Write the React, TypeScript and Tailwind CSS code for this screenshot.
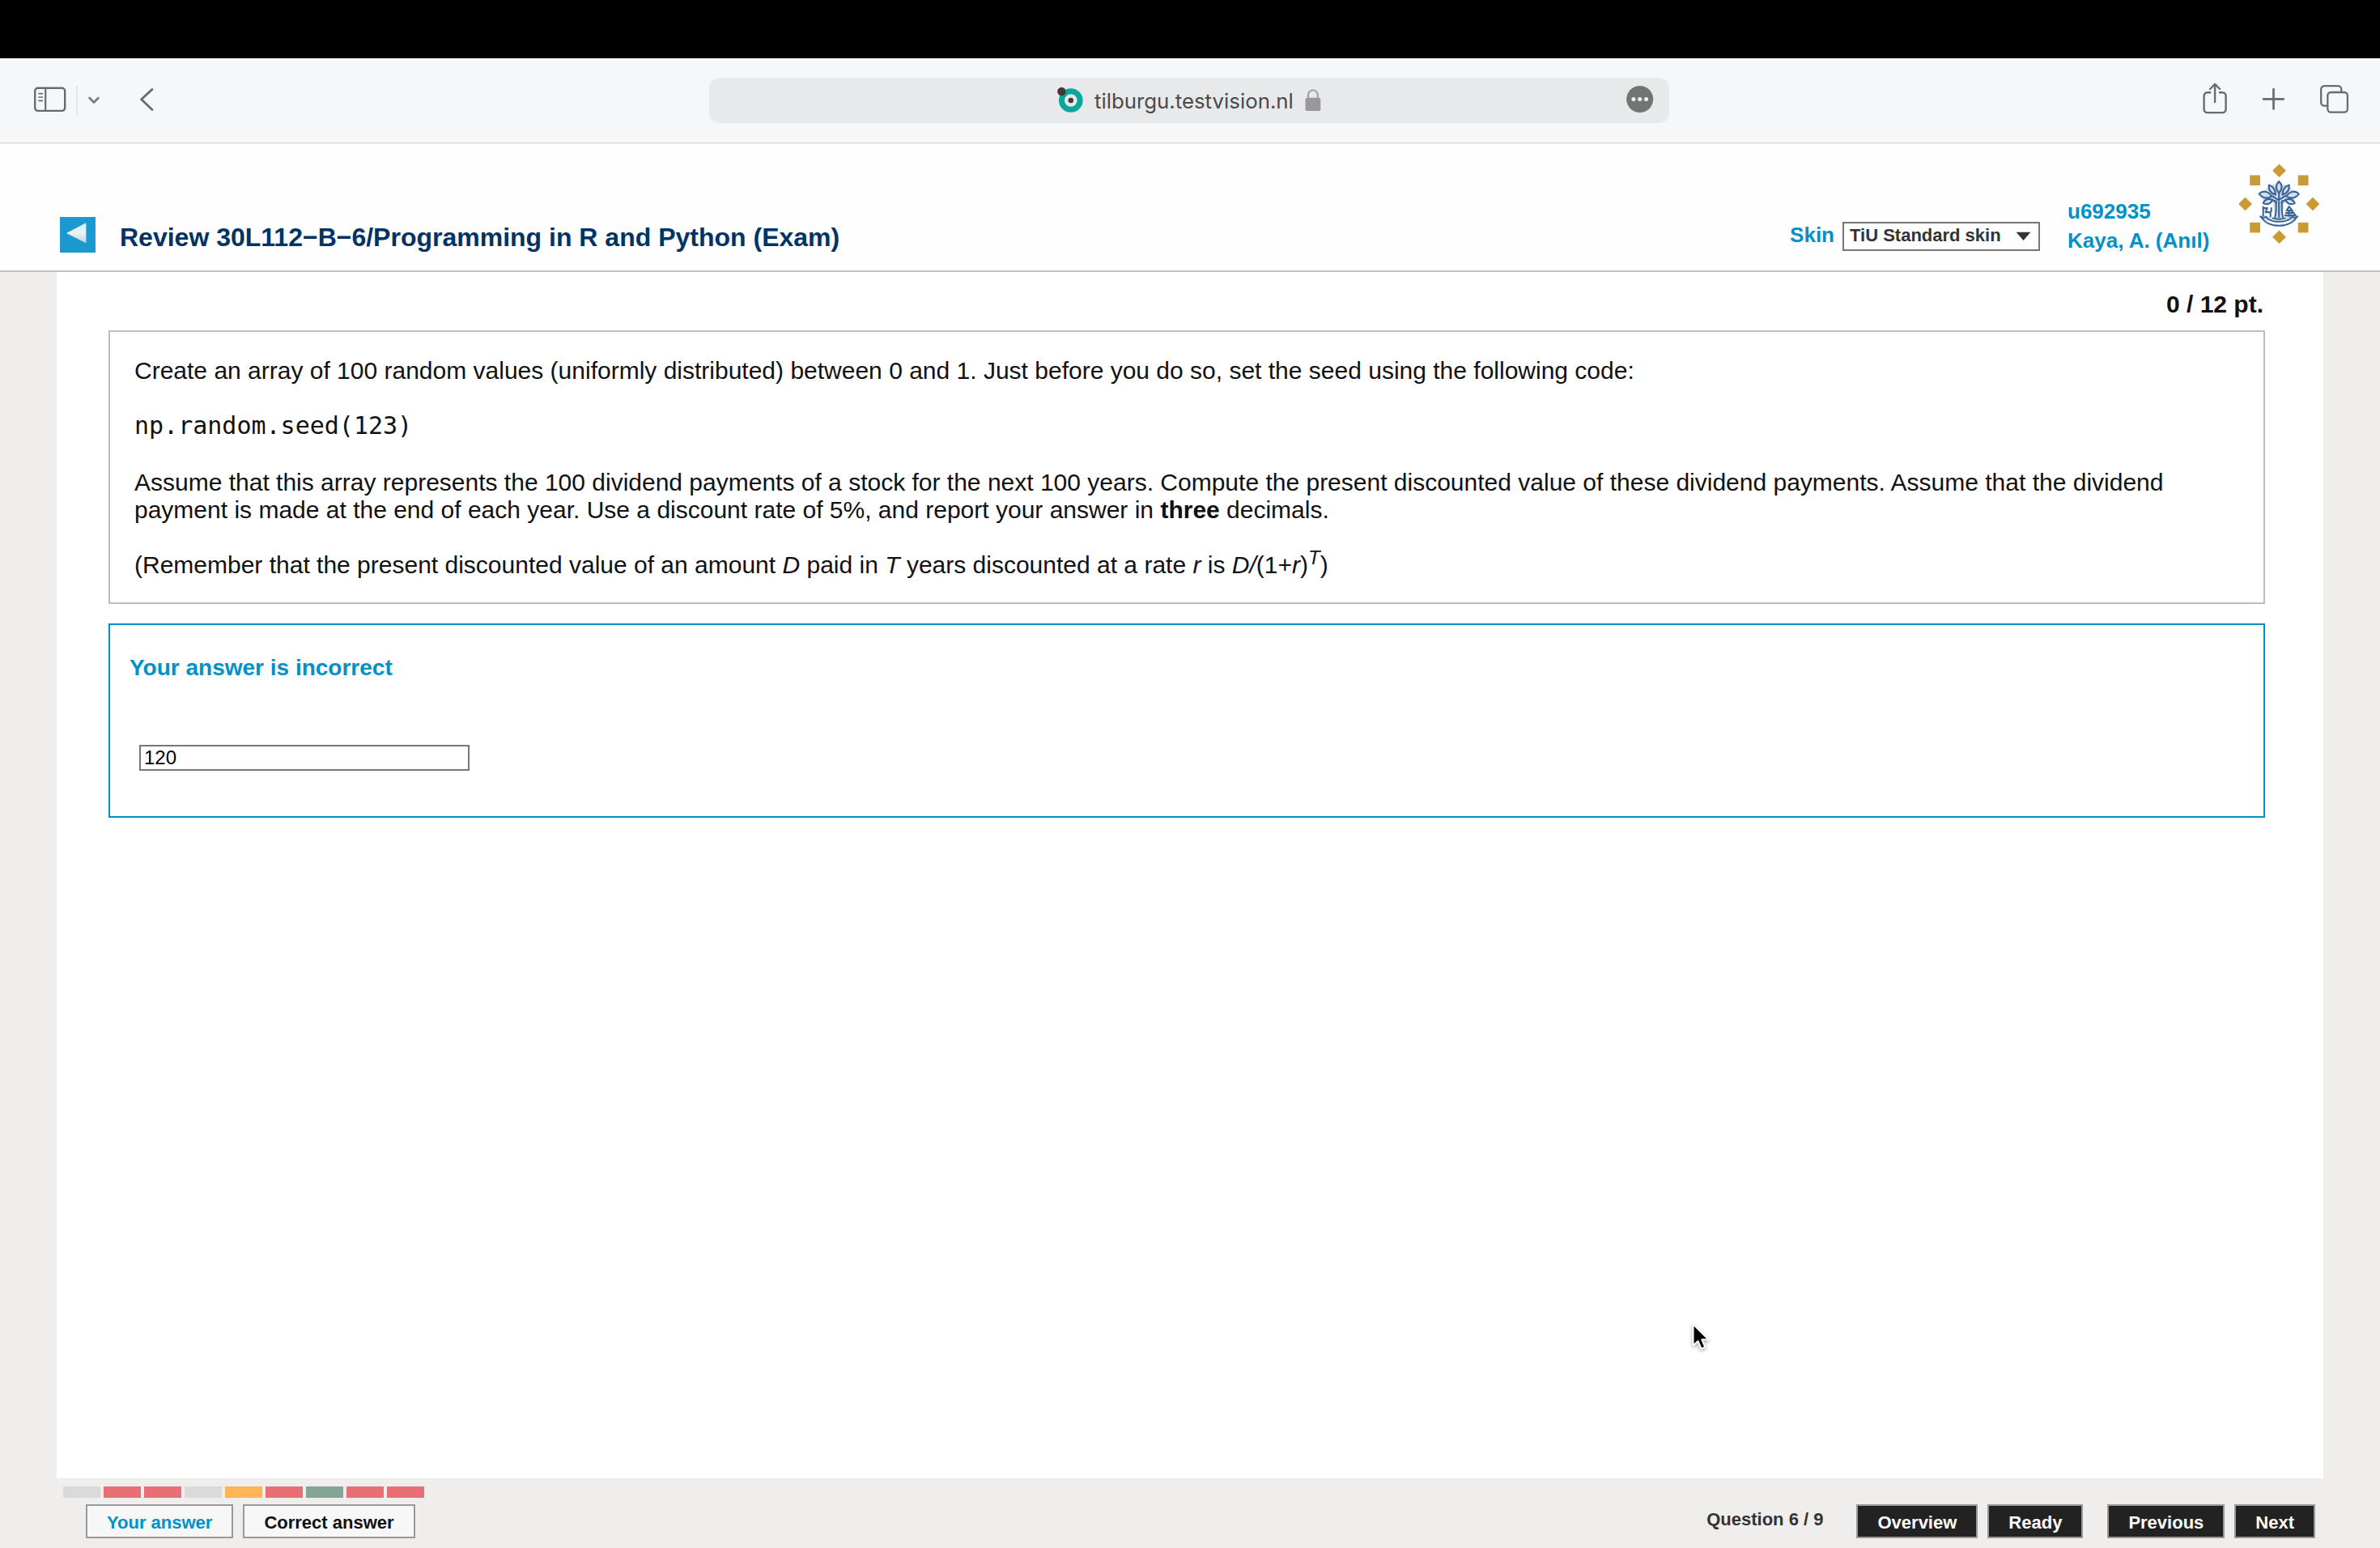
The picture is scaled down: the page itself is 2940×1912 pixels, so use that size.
import type { ReactNode } from "react";

const progress = [
  "bg-[#dadada]",
  "bg-[#e86f76]",
  "bg-[#e86f76]",
  "bg-[#dadada]",
  "bg-[#ffb555]",
  "bg-[#e86f76]",
  "bg-[#84a497]",
  "bg-[#e86f76]",
  "bg-[#e86f76]",
];

function SidebarIcon() {
  return (
    <svg className="block h-[32px] w-[40px]" viewBox="0 0 40 32" fill="none" stroke="#6b6b6d">
      <rect x="1.2" y="1.7" width="37" height="28.2" rx="3.6" strokeWidth="2.4" />
      <path d="M14.2 2v28" strokeWidth="2.2" />
      <path d="M6 8.6h4.4M6 13h4.4M6 17.4h4.4" strokeWidth="1.7" strokeLinecap="round" />
    </svg>
  );
}

function ShareIcon() {
  return (
    <svg className="block h-[42px] w-[32px]" viewBox="0 0 32 42" fill="none" stroke="#6b6b6d" strokeWidth="2.4" strokeLinecap="round" strokeLinejoin="round">
      <path d="M10.2 14.300H5.600a4 4 0 0 0-4 4v16.800a4 4 0 0 0 4 4h19a4 4 0 0 0 4-4v-16.800a4 4 0 0 0-4-4H20" strokeLinecap="butt" />
      <path d="M15.100 26V4M9 10l6.100-6.100 6.100 6.100" />
    </svg>
  );
}

function TabsIcon() {
  return (
    <svg className="block h-[36px] w-[36px]" viewBox="0 0 36 36" fill="none" stroke="#6b6b6d" strokeWidth="2.3">
      <path d="M9.2 25.6H5.2a4 4 0 0 1-4-4V5.200a4 4 0 0 1 4-4h17a4 4 0 0 1 4 4v4" />
      <rect x="9.3" y="9" width="24.6" height="24.6" rx="4" />
    </svg>
  );
}

function UniversityLogo() {
  return (
    <svg className="block h-[100px] w-[100px]" viewBox="0 0 100 100" fill="none">
      <g fill="#cc9a33">
        <path d="M49.5 .4l8.4 8.3-8.4 8.3-8.4-8.3z" />
        <path d="M49.5 82.5l8.4 8.3-8.4 8.3-8.4-8.3z" />
        <path d="M7.6 41.5l8.3 8.4-8.3 8.4L0 50.700v-1.600z" />
        <path d="M91 41.5l8.3 8.4-8.3 8.4-8.4-8.4z" />
        <rect x="13.2" y="14.4" width="12.8" height="12.6" />
        <rect x="72.7" y="14.4" width="12.8" height="12.6" />
        <rect x="13.2" y="72.8" width="12.8" height="12.6" />
        <rect x="72.7" y="72.8" width="12.8" height="12.6" />
      </g>
      <g transform="translate(-.3 -.9)">
        <path d="M36 30l13-6 14 6 8 9-6 13-9-3-3 22h-8l-3-22-9 4-6-14z" fill="#c6d6e6" opacity=".8" />
        <path d="M29 66h12v6H29zM58 66h12v6H58z" fill="#c6d6e6" opacity=".8" />
        <g stroke="#3a6496" strokeWidth="2.1" strokeLinecap="round" strokeLinejoin="round">
          <path d="M49.5 23c-4.6 4.8-4.6 9.5 0 14.3 4.6-4.8 4.6-9.5 0-14.3z" />
          <path d="M37 27.5c-.8 6.2 1.8 9.800 8.300 12-.2-6.600-2.800-10.400-8.300-12z" />
          <path d="M62 27.5c.8 6.200-1.800 9.800-8.300 12 .2-6.600 2.800-10.400 8.300-12z" />
          <path d="M25 38.5c4.400-4.600 10.500-4 15.700 2.800-6.400 3.600-11.400 2.600-15.700-2.800z" />
          <path d="M74 38.5c-4.400-4.600-10.500-4-15.700 2.800 6.400 3.600 11.400 2.600 15.700-2.800z" />
          <path d="M30 50c2-5 6-6.400 11.500-4.400-2 5-6 6.600-11.500 4.400z" />
          <path d="M69 50c-2-5-6-6.400-11.500-4.400 2 5 6 6.600 11.500 4.400z" />
          <path d="M49.5 37v8M41 41l8 5 8-5M42 46l4.500 3M57 46l-4.500 3" />
          <path d="M45.5 47c1 8 .6 14-.8 20M53.500 47c-1 8-.6 14 .8 20M49.500 48v19" />
          <path d="M30 54.5v11M30 56h5l-2 5h6v5M40 56v4" />
          <path d="M62 54l-3 5h7zM62 59v7M57 65h13M66 60l4 5M58 62h8" />
          <path d="M26.5 66.5c1.500 1.500 4 1.500 6.500.5M72.500 66.500c-1.500 1.500-4 1.500-6.500.5" />
          <path d="M27.5 66.5c3.500 7 12 11.200 22 11.200s18.500-4.200 22-11.200" />
          <path d="M33 66.5c3.500 4 9.500 6.200 16.500 6.200s13-2.200 16.500-6.200" />
          <path d="M42 68.5c4.800 1.400 10.200 1.400 15 0" />
        </g>
      </g>
    </svg>
  );
}

function BrowserBar() {
  return (
    <div className="flex h-[104px] shrink-0 items-start bg-[#f6f7f9]">
      <div className="ml-[42px] mt-[35px]">
        <SidebarIcon />
      </div>
      <div className="ml-[12px] mt-[34px] h-[36px] w-[2px] bg-[#e5e6e8]" />
      <svg className="ml-[12px] mt-[46px] block h-[12px] w-[16px]" viewBox="0 0 16 12" fill="none" stroke="#7f7f81" strokeWidth="2.8" strokeLinecap="round" strokeLinejoin="round">
        <path d="M2.6 3l5.4 5.4L13.4 3" />
      </svg>
      <svg className="ml-[48px] mt-[36px] block h-[30px] w-[18px]" viewBox="0 0 18 30" fill="none" stroke="#6b6b6d" strokeWidth="2.8" strokeLinecap="round" strokeLinejoin="round">
        <path d="M16 2.4L2.6 14.7 16 27.4" />
      </svg>
      <div className="ml-[686px] mt-[24px] flex h-[56px] w-[1186px] items-start rounded-[13px] bg-[#e8e9eb]">
        <svg className="ml-[428px] mt-[10px] block h-[36px] w-[36px]" viewBox="0 0 36 36">
          <circle cx="18.8" cy="18" r="14.8" fill="#0aa79a" />
          <circle cx="18.8" cy="18" r="7.8" fill="#e8e9eb" />
          <circle cx="18.8" cy="18" r="3.3" fill="#433a38" />
          <circle cx="7.4" cy="7" r="5.2" fill="#433a38" />
        </svg>
        <span className="ml-[12px] mt-[13px] whitespace-nowrap font-['Inter'] text-[25.8px] leading-[32px] text-[#4a4a4c]">tilburgu.testvision.nl</span>
        <svg className="ml-[13px] mt-[13px] block h-[30px] w-[22px]" viewBox="0 0 22 30">
          <path d="M5 13V8.2a5.9 5.9 0 0 1 11.8 0V13" fill="none" stroke="#a3a3a5" strokeWidth="2.2" />
          <rect x="1.5" y="11.8" width="18.8" height="16.3" rx="2.6" fill="#99999b" />
        </svg>
        <svg className="ml-auto mr-[19px] mt-[9px] block h-[34px] w-[34px]" viewBox="0 0 34 34">
          <circle cx="16.7" cy="17.5" r="16.5" fill="#737573" />
          <g fill="#f1f1f2">
            <circle cx="8.9" cy="17.5" r="2.5" />
            <circle cx="16.7" cy="17.5" r="2.5" />
            <circle cx="24.5" cy="17.5" r="2.5" />
          </g>
        </svg>
      </div>
      <div className="ml-auto flex">
        <div className="mr-[41px] mt-[28px]">
          <ShareIcon />
        </div>
        <svg className="mr-[43px] mt-[36px] block h-[29px] w-[29px]" viewBox="0 0 29 29" stroke="#6b6b6d" strokeWidth="2.7" strokeLinecap="round">
          <path d="M14.5 2v24.5M2.2 14.4h24.5" />
        </svg>
        <div className="mr-[38px] mt-[33px]">
          <TabsIcon />
        </div>
      </div>
    </div>
  );
}

function PageHeader() {
  return (
    <header className="flex h-[158px] shrink-0 items-start border-b-2 border-[#c3c1b9] bg-[#fefefe] font-bold">
      <svg className="ml-[74px] mt-[90px] block h-[44px] w-[44px]" viewBox="0 0 44 44">
        <defs>
          <linearGradient id="arrow" x1="0" y1="0" x2="0" y2="1">
            <stop offset="0" stopColor="#dff1fa" />
            <stop offset=".5" stopColor="#e8f3f8" />
            <stop offset="1" stopColor="#c3d4dc" />
          </linearGradient>
        </defs>
        <rect width="44" height="44" fill="#1c99ce" />
        <path d="M8 20L32.3 7.300v25z" fill="url(#arrow)" />
      </svg>
      <h1 className="ml-[30px] mt-[97px] whitespace-nowrap text-[32px] leading-[36px] text-[#003366]">Review 30L112−B−6/Programming in R and Python (Exam)</h1>
      <div className="ml-auto flex items-start text-[26px] text-[#0091c9]">
        <span className="mr-[10px] mt-[97px] leading-[30px]">Skin</span>
        <div className="mr-[34px] mt-[96px] flex h-[36px] w-[244px] items-start justify-between border-2 border-[#777777] pl-[7px] pr-[9px]">
          <span className="mt-[2px] text-[22px] leading-[25px] text-[#333333]">TiU Standard skin</span>
          <svg className="mt-[10px] block h-[12px] w-[19px]" viewBox="0 0 19 12">
            <path d="M.6 .8h17.8L9.5 11z" fill="#333333" />
          </svg>
        </div>
        <div className="mt-[65px] w-[212px] whitespace-nowrap leading-[36px]">
          <div>u692935</div>
          <div>Kaya, A. (Anıl)</div>
        </div>
        <div className="mr-[74px] mt-[24px]">
          <UniversityLogo />
        </div>
      </div>
    </header>
  );
}

function QuestionBox() {
  return (
    <section className="h-[338px] w-[2664px] border-2 border-[#c0bcb7] pl-[30px] pt-[31px] text-[30px] leading-[34px]">
      <p className="mb-[33px]">
        Create an array of 100 random values (uniformly distributed) between 0 and 1. Just before you do so, set the seed using the following code:
      </p>
      <p className="mb-[36px] font-['DejaVu_Sans_Mono'] leading-[35px]">np.random.seed(123)</p>
      <p className="mb-[34px] whitespace-nowrap">
        Assume that this array represents the 100 dividend payments of a stock for the next 100 years. Compute the present discounted value of these dividend payments. Assume that the dividend
        <br />
        payment is made at the end of each year. Use a discount rate of 5%, and report your answer in <b>three</b> decimals.
      </p>
      <p>
        (Remember that the present discounted value of an amount <i>D</i> paid in <i>T</i> years discounted at a rate <i>r</i> is <i>D/</i>(1+<i>r</i>)
        <sup className="relative -top-[11px] align-baseline text-[24px] leading-none">
          <i>T</i>
        </sup>
        )
      </p>
    </section>
  );
}

function AnswerBox() {
  return (
    <section className="mt-[24px] h-[240px] w-[2664px] border-2 border-[#0091c9] pl-[24px] pt-[37px]">
      <h2 className="text-[28px] font-bold leading-[31px] text-[#0091c9]">Your answer is incorrect</h2>
      <div className="ml-[12px] mt-[80px] h-[32px] w-[408px] border-2 border-[#777777] bg-white pl-[4px] text-[24px] leading-[27px] text-black">120</div>
    </section>
  );
}

function LightButton({ children, color }: { children: ReactNode; color: string }) {
  return (
    <button className={"flex h-[42px] items-start border-2 border-[#999999] bg-[#f7f7f7] px-[24px] pt-[8px] leading-[25px] " + color}>{children}</button>
  );
}

function DarkButton({ children }: { children: ReactNode }) {
  return (
    <button className="flex h-[42px] items-start border-2 border-[#999999] bg-[#222222] px-[24px] pt-[8px] leading-[25px] text-white">{children}</button>
  );
}

function Footer() {
  return (
    <footer className="h-[86px] shrink-0 pt-[10px] text-[22px] font-bold">
      <div className="ml-[78px] flex gap-[4px]">
        {progress.map((color, i) => (
          <div key={i} className={"h-[14px] w-[46px] " + color} />
        ))}
      </div>
      <div className="mt-[8px] flex items-start pl-[106px] pr-[80px]">
        <div className="flex gap-[12px]">
          <LightButton color="text-[#0091c9]">Your answer</LightButton>
          <LightButton color="text-[#111111]">Correct answer</LightButton>
        </div>
        <div className="ml-auto flex items-start gap-[12px]">
          <span className="mr-[29px] mt-[6px] leading-[25px] text-[#333333]">Question 6 / 9</span>
          <DarkButton>Overview</DarkButton>
          <DarkButton>Ready</DarkButton>
          <div className="w-[6px]" />
          <DarkButton>Previous</DarkButton>
          <DarkButton>Next</DarkButton>
        </div>
      </div>
    </footer>
  );
}

export default function App() {
  return (
    <div className="relative flex h-[1912px] w-[2940px] flex-col overflow-hidden bg-[#efeeec] font-['Liberation_Sans',sans-serif] text-[#111111]">
      <div className="h-[72px] shrink-0 bg-black" />
      <BrowserBar />
      <div className="h-[2px] shrink-0 border-t border-[#d3d4d6] bg-[#f1f1f2]" />
      <PageHeader />
      <main className="mx-[70px] flex h-[1490px] shrink-0 flex-col bg-white px-[64px]">
        <div className="mb-[16px] mt-[23px] pr-[10px] text-right text-[30px] font-bold leading-[33px]">0 / 12 pt.</div>
        <QuestionBox />
        <AnswerBox />
      </main>
      <Footer />
      <svg className="absolute left-[2086px] top-[1629px] h-[44px] w-[30px] drop-shadow-[0_2px_2px_rgba(0,0,0,0.35)]" viewBox="0 0 30 44">
        <path d="M5.5 6.5V33l6-5.600 4 9.400 4.800-2-4-9.200h8.200z" fill="#000" stroke="#fff" strokeWidth="2" strokeLinejoin="round" />
      </svg>
    </div>
  );
}
